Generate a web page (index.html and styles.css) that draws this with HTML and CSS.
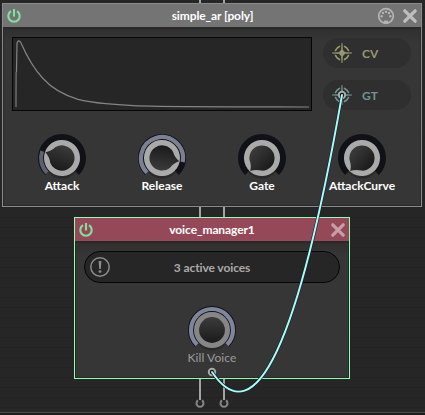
FILE: index.html
```
<!DOCTYPE html>
<html lang="en">
<head>
<meta charset="utf-8">
<title>simple_ar</title>
<link rel="stylesheet" href="styles.css">
</head>
<body>
<svg class="defs" width="0" height="0">
  <defs>
    <linearGradient id="cap" x1="0" y1="0" x2="0" y2="1"><stop offset="0" stop-color="#3b3b3b"/><stop offset="1" stop-color="#1b1b1b"/></linearGradient>
    <symbol id="power" viewBox="0 0 16 16"><path d="M5 3.2A5.7 5.7 0 1 0 11 3.2M8 1V8.6" fill="none" stroke="currentColor" stroke-width="2.1"/></symbol>
    <symbol id="close" viewBox="0 0 16 16"><path d="M2.8 2.8L13.2 13.2M13.2 2.8L2.8 13.2" fill="none" stroke="currentColor" stroke-width="3.2" stroke-linecap="round"/></symbol>
    <symbol id="target" viewBox="0 0 20 20"><circle cx="10" cy="10" r="6.9" fill="none" stroke="currentColor" stroke-width="1.5"/><path d="M10 0V20M0 10H20" stroke="#2d2d2d" stroke-width="3.6"/><path d="M10 0L10.6 7L13 10L10.6 13L10 20L9.4 13L7 10L9.4 7ZM0 10L7 9.4L10 7L13 9.4L20 10L13 10.6L10 13L7 10.6Z" fill="currentColor" stroke="currentColor" stroke-width=".6"/></symbol>
    <symbol id="track" viewBox="-25 -25 50 50"><circle r="18" cy="2.5" fill="#292929"/><path d="M-14.85 14.85A21 21 0 1 1 14.85 14.85" fill="none" stroke="#111217" stroke-width="6"/></symbol>
    <symbol id="dial" viewBox="-25 -25 50 50"><circle r="18" fill="#aaa"/><path d="M-9.6 -8.2Q-12.6 -2.6 -17.6 0Q-12.6 2.6 -9.6 8.2A12.6 12.6 0 1 0 -9.6 -8.2Z" fill="url(#cap)"/></symbol>
  </defs>
</svg>
<main class="canvas">
  <svg class="wires" width="425" height="415">
    <path d="M200 0V400M224 0V400" fill="none" stroke="#a4a4a4" stroke-width="2"/>
    <path d="M198 400.4A3.5 3.5 0 1 0 202 400.4M222 400.4A3.5 3.5 0 1 0 226 400.4" fill="none" stroke="#868686" stroke-width="2"/>
    <path d="M0 412.5H425" stroke="#4a4a4a"/>
    <path d="M0 414H425" stroke="#1d1d1d" stroke-width="2"/>
  </svg>

  <section class="node envelope">
    <header class="bar">
      <svg class="power"><use href="#power"/></svg>
      <h1>simple_ar [poly]</h1>
      <svg class="midi" viewBox="0 0 18 18"><circle cx="9" cy="9" r="7.3" fill="none" stroke="#b4b4b4" stroke-width="1.7"/><g fill="#b4b4b4"><circle cx="4.7" cy="9.2" r="1.2"/><circle cx="6" cy="6" r="1.2"/><circle cx="9" cy="4.8" r="1.2"/><circle cx="12" cy="6" r="1.2"/><circle cx="13.3" cy="9.2" r="1.2"/><path d="M6.8 16V13.6H11.2V16Z"/></g></svg>
      <svg class="close"><use href="#close"/></svg>
    </header>
    <div class="body">
      <div class="top">
        <svg class="graph" viewBox="13 38 298 72"><path d="M16 107V95L17 44Q17.3 40.8 19 40.8Q20 40.8 20.5 42C28 59 34 69 43 78.5C53 89.5 65 95.5 78 99.3C95 103.8 120 105.2 150 106.2C190 107 240 106.9 309 107" fill="none" stroke="#858585" stroke-width="1.2"/><path d="M16 107V72" stroke="#585858" stroke-width="1.5"/></svg>
        <div class="outputs">
          <div class="output cv"><svg><use href="#target"/></svg><span>CV</span></div>
          <div class="output gt"><svg><use href="#target"/></svg><span>GT</span></div>
        </div>
      </div>
      <div class="knobs">
        <div class="knob"><svg viewBox="-25 -25 50 50"><use href="#track" x="-25" y="-25" width="50" height="50"/><path d="M-14.85 14.85A21 21 0 0 1 -19.85 -6.85" fill="none" stroke="#5c6070" stroke-width="4"/><use href="#dial" x="-25" y="-25" width="50" height="50" transform="rotate(19)"/></svg><span>Attack</span></div>
        <div class="knob"><svg viewBox="-25 -25 50 50"><use href="#track" x="-25" y="-25" width="50" height="50"/><path d="M-14.85 14.85A21 21 0 1 1 20.6 4" fill="none" stroke="#7b8192" stroke-width="4.2"/><use href="#dial" x="-25" y="-25" width="50" height="50" transform="rotate(191)"/></svg><span>Release</span></div>
        <div class="knob"><svg viewBox="-25 -25 50 50"><use href="#track" x="-25" y="-25" width="50" height="50"/><use href="#dial" x="-25" y="-25" width="50" height="50" transform="rotate(-48)"/></svg><span>Gate</span></div>
        <div class="knob"><svg viewBox="-25 -25 50 50"><use href="#track" x="-25" y="-25" width="50" height="50"/><use href="#dial" x="-25" y="-25" width="50" height="50" transform="rotate(-48)"/></svg><span>AttackCurve</span></div>
      </div>
    </div>
  </section>

  <section class="node voices">
    <header class="bar">
      <svg class="power"><use href="#power"/></svg>
      <h1>voice_manager1</h1>
      <svg class="close"><use href="#close"/></svg>
    </header>
    <div class="body">
      <div class="status">
        <svg viewBox="0 0 20 20"><circle cx="10" cy="10" r="9.2" fill="none" stroke="#8c8c8c" stroke-width="1.5"/><path d="M8.6 4H11.4L10.8 12H9.2Z" fill="#8c8c8c"/><circle cx="10" cy="14.6" r="1.4" fill="#8c8c8c"/></svg>
        <span>3 active voices</span>
      </div>
      <div class="knob kill"><svg viewBox="-25 -25 50 50"><use href="#track" x="-25" y="-25" width="50" height="50"/><path d="M-14.85 14.85A21 21 0 1 1 14.85 14.85" fill="none" stroke="#7f869b" stroke-width="4.2"/><circle r="18" fill="#868686"/><circle r="12.9" fill="url(#cap)"/></svg><span>Kill Voice</span></div>
    </div>
  </section>

  <svg class="cable" width="425" height="415">
    <g fill="#111" stroke="#aaa" stroke-width="2"><circle cx="342" cy="95" r="3.2"/><circle cx="212" cy="372" r="3.2"/></g>
    <path d="M342 95Q277 468 212 372" fill="none" stroke="#202020" stroke-width="3.2"/>
    <path d="M342 95Q277 468 212 372" fill="none" stroke="#a6ffff" stroke-width="1.9" stroke-linecap="round"/>
  </svg>
</main>
</body>
</html>
```
FILE: styles.css
```
* { box-sizing: border-box; }
body { margin: 0; background: #262626; font: 700 12px/16px Lato, sans-serif; color: #fff; }
svg { display: block; flex: none; }
.defs { position: absolute; }
.canvas {
  position: relative; width: 425px; height: 415px; overflow: hidden;
  background: repeating-linear-gradient(#262626 0 7px, #232323 7px 8px, #262626 8px 10px);
}
.wires, .cable { position: absolute; left: 0; top: 0; }
.node { position: absolute; display: flex; flex-direction: column; border: 1px solid; }
.envelope { left: 2px; top: 3px; width: 420px; height: 204px; border-color: #8c8c8c; }
.voices { left: 74px; top: 217px; width: 276px; height: 162px; border-color: #90ffb1; }
.bar { display: flex; align-items: center; height: 23px; padding: 0 3px; background: #747474; }
.voices .bar { background: #954958; }
.bar h1 { flex: 1; margin: 0; font-size: 12px; line-height: 24px; text-align: center; letter-spacing: -.1px; }
.envelope h1 { padding-left: 26px; }
.power { width: 16px; height: 16px; color: #83dfa0; }
.close { width: 16px; height: 16px; color: #bebebe; }
.voices .close { color: #c6a0a7; }
.midi { width: 18px; height: 18px; margin-right: 7px; }
.body { flex: 1; border: 1px solid #292929; border-top-width: 2px; background: linear-gradient(#303030, #363636 12px); }
.top { display: flex; gap: 11px; padding: 8px 0 0 8px; }
.graph { width: 300px; height: 74px; border: 1px solid #060606; background: #262626; }
.outputs { display: flex; flex-direction: column; gap: 12px; padding-top: 1px; }
.output { display: flex; align-items: center; gap: 10px; width: 88px; height: 30px; padding-left: 9px; border-radius: 15px; background: #2f2f2f; }
.output svg { width: 20px; height: 20px; }
.output span { padding-top: 1px; }
.cv { color: #969a70; }
.gt { color: #709494; }
.knobs { display: flex; padding: 22px 0 0 8px; }
.knob { display: flex; flex-direction: column; align-items: center; width: 100px; }
.knob svg { width: 50px; height: 50px; }
.knob span { margin-top: -5px; white-space: nowrap; }
.status { display: flex; align-items: center; height: 32px; margin: 8px 8px 0; padding: 0 5px; border: 1px solid #060606; border-radius: 16px; background: #262626; color: #aaa; }
.status svg { width: 20px; height: 20px; }
.status span { flex: 1; padding: 1px 20px 0 0; text-align: center; letter-spacing: -.1px; }
.kill { margin: 22px auto 0; color: #9c9c9c; font-weight: 400; letter-spacing: .1px; }
```
